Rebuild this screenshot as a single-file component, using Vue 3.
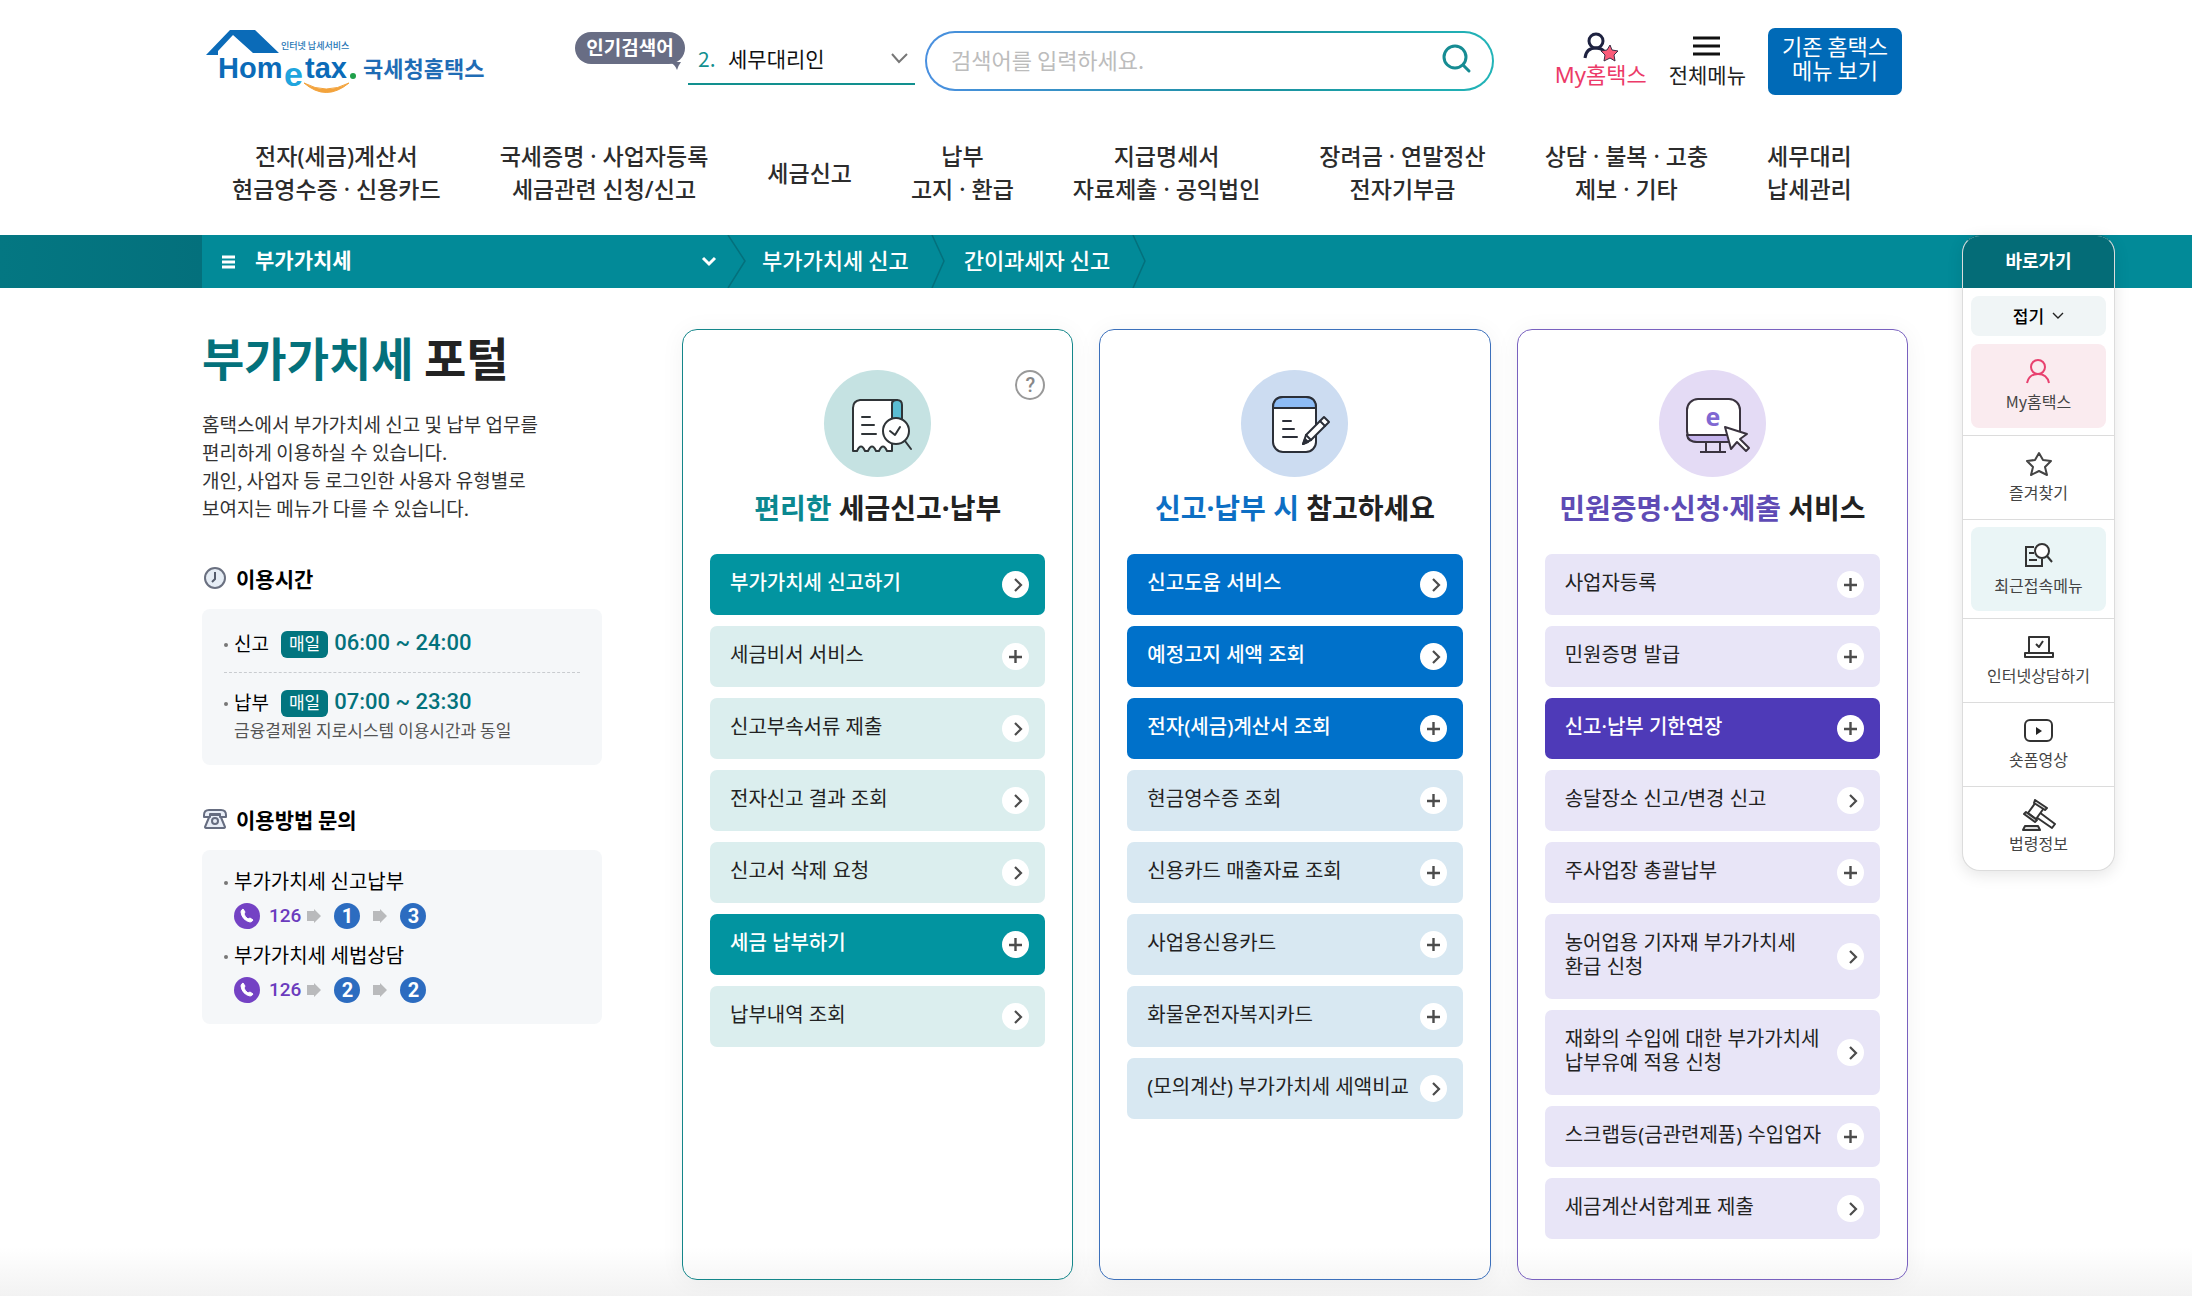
<script setup>
const navItems = [
  ['전자(세금)계산서', '현금영수증 · 신용카드'],
  ['국세증명 · 사업자등록', '세금관련 신청/신고'],
  ['세금신고'],
  ['납부', '고지 · 환급'],
  ['지급명세서', '자료제출 · 공익법인'],
  ['장려금 · 연말정산', '전자기부금'],
  ['상담 · 불복 · 고충', '제보 · 기타'],
  ['세무대리', '납세관리'],
]

const hours = [
  { name: '신고', time: '06:00 ~ 24:00' },
  { name: '납부', time: '07:00 ~ 23:30', note: '금융결제원 지로시스템 이용시간과 동일' },
]

const contacts = [
  { name: '부가가치세 신고납부', steps: [1, 3] },
  { name: '부가가치세 세법상담', steps: [2, 2] },
]

const cards = [
  {
    key: 'teal',
    accent: '편리한',
    rest: '세금신고·납부',
    help: true,
    items: [
      { lines: ['부가가치세 신고하기'], strong: true },
      { lines: ['세금비서 서비스'], more: true },
      { lines: ['신고부속서류 제출'] },
      { lines: ['전자신고 결과 조회'] },
      { lines: ['신고서 삭제 요청'] },
      { lines: ['세금 납부하기'], strong: true, more: true },
      { lines: ['납부내역 조회'] },
    ],
  },
  {
    key: 'blue',
    accent: '신고·납부 시',
    rest: '참고하세요',
    items: [
      { lines: ['신고도움 서비스'], strong: true },
      { lines: ['예정고지 세액 조회'], strong: true },
      { lines: ['전자(세금)계산서 조회'], strong: true, more: true },
      { lines: ['현금영수증 조회'], more: true },
      { lines: ['신용카드 매출자료 조회'], more: true },
      { lines: ['사업용신용카드'], more: true },
      { lines: ['화물운전자복지카드'], more: true },
      { lines: ['(모의계산) 부가가치세 세액비교'] },
    ],
  },
  {
    key: 'purple',
    accent: '민원증명·신청·제출',
    rest: '서비스',
    items: [
      { lines: ['사업자등록'], more: true },
      { lines: ['민원증명 발급'], more: true },
      { lines: ['신고·납부 기한연장'], strong: true, more: true },
      { lines: ['송달장소 신고/변경 신고'] },
      { lines: ['주사업장 총괄납부'], more: true },
      { lines: ['농어업용 기자재 부가가치세', '환급 신청'] },
      { lines: ['재화의 수입에 대한 부가가치세', '납부유예 적용 신청'] },
      { lines: ['스크랩등(금관련제품) 수입업자'], more: true },
      { lines: ['세금계산서합계표 제출'] },
    ],
  },
]
</script>

<template>
  <div class="page">
    <header class="wrap header">
      <div class="top">
        <a href="#" class="logo" aria-label="국세청 홈택스">
          <svg width="284" height="70" viewBox="0 0 284 70">
            <path d="M0 27 L24 2 H49 L73 25 H47 L27 7 L12 23 V27 Z" fill="#0b6bb8" />
            <text x="75" y="21" class="logo-sub">인터넷 납세서비스</text>
            <text x="12" y="50" class="logo-en">Hom</text>
            <text x="78" y="58" class="logo-e">e</text>
            <text x="99" y="50" class="logo-en">tax</text>
            <circle cx="147" cy="48" r="3" fill="#1fa04a" />
            <path d="M98 55 Q120 74 143 55 Q120 67 98 55 Z" fill="#f3a33c" stroke="#f3a33c" />
            <text x="157" y="49" class="logo-ko">국세청홈택스</text>
          </svg>
        </a>
        <label class="pill" for="keyword">인기검색어
          <svg width="12" height="8" viewBox="0 0 12 8"><path d="M0 0 H12 Q9 4 8 8 Q6 2 0 0Z" fill="#686d84" /></svg>
        </label>
        <div class="keyword">
          <span class="rank">2.</span>
          <select id="keyword"><option>세무대리인</option></select>
          <svg class="chev" width="17" height="11" viewBox="0 0 17 11"><path d="M1 1 L8 9 L16 1" fill="none" stroke="#777" stroke-width="2" /></svg>
        </div>
        <form class="search" @submit.prevent>
          <input type="text" aria-label="검색어" placeholder="검색어를 입력하세요." />
          <button type="submit" aria-label="검색">
            <svg width="30" height="30" viewBox="0 0 30 30" fill="none" stroke="#168c93" stroke-width="3"><circle cx="13" cy="13" r="11" /><path d="M21 21 L27 27" stroke-linecap="round" /></svg>
          </button>
        </form>
        <a href="#" class="util my">
          <svg width="36" height="30" viewBox="0 0 36 30">
            <g fill="none" stroke="#1e2240" stroke-width="3"><circle cx="13" cy="9" r="7" /><path d="M2 26 Q3 16 13 16 Q18 16 21 19" /></g>
            <path d="M27 13 L29 18 L35 19 L31 23 L32 29 L27 26 L21 29 L22 23 L18 19 L24 18 Z" fill="#fb5b79" stroke="#3b2d45" stroke-width="1" stroke-linejoin="round" />
          </svg>
          My홈택스
        </a>
        <a href="#" class="util">
          <svg width="28" height="30" viewBox="0 0 28 30"><path d="M0 6 H27 M0 14 H27 M0 22 H27" stroke="#111" stroke-width="3" /></svg>
          전체메뉴
        </a>
        <button type="button" class="old">기존 홈택스<br />메뉴 보기</button>
      </div>
      <nav class="gnb">
        <a v-for="item in navItems" :key="item[0]" href="#">
          <span v-for="line in item" :key="line">{{ line }}</span>
        </a>
      </nav>
    </header>

    <div class="crumbs">
      <div class="crumb-edge"></div>
      <nav class="crumb-row" aria-label="현재 위치">
        <button type="button" class="crumb-menu">
          <svg width="15" height="16" viewBox="0 0 15 16"><path d="M1 3 H14 M1 8 H14 M1 13 H14" stroke="#fff" stroke-width="3" /></svg>
          <span>부가가치세</span>
          <svg width="16" height="11" viewBox="0 0 16 11"><path d="M2 2 L8 8 L14 2" fill="none" stroke="#fff" stroke-width="3" /></svg>
        </button>
        <svg class="sep" width="20" height="53" viewBox="0 0 20 53"><path d="M1 0 L18 26 L1 53" /></svg>
        <a href="#">부가가치세 신고</a>
        <svg class="sep" width="20" height="53" viewBox="0 0 20 53"><path d="M3 0 L15 26 L3 53" /></svg>
        <a href="#">간이과세자 신고</a>
        <svg class="sep" width="20" height="53" viewBox="0 0 20 53"><path d="M3 0 L15 26 L3 53" /></svg>
      </nav>
    </div>

    <div class="main-bg">
      <main class="wrap main">
        <section class="intro">
          <h1><em>부가가치세</em> 포털</h1>
          <p class="desc">
            홈택스에서 부가가치세 신고 및 납부 업무를<br />편리하게 이용하실 수 있습니다.<br />
            개인, 사업자 등 로그인한 사용자 유형별로<br />보여지는 메뉴가 다를 수 있습니다.
          </p>

          <h2>
            <svg width="24" height="24" viewBox="0 0 24 24" fill="none"><circle cx="12" cy="12" r="10" fill="#e6edf5" stroke="#6a7080" stroke-width="2" /><path d="M12 6 V13 L9 16" stroke="#555c6c" stroke-width="2" /></svg>
            이용시간
          </h2>
          <ul class="box hours">
            <li v-for="h in hours" :key="h.name">
              <div class="hour"><span class="name">{{ h.name }}</span><span class="daily">매일</span><strong>{{ h.time }}</strong></div>
              <p v-if="h.note">{{ h.note }}</p>
            </li>
          </ul>

          <h2>
            <svg width="24" height="24" viewBox="0 0 24 24" fill="#e9eef7" stroke="#666d80" stroke-width="2" stroke-linejoin="round"><path d="M7 8 L2 20 Q2 21 4 21 H20 Q22 21 22 20 L17 8 Z" /><path d="M1 8 Q1 3 6 3 H18 Q23 3 23 8 V10 H17 V7 H7 V10 H1 Z" /><circle cx="12" cy="14" r="3" /></svg>
            이용방법 문의
          </h2>
          <ul class="box contacts">
            <li v-for="c in contacts" :key="c.name">
              <span class="name">{{ c.name }}</span>
              <div class="dial">
                <svg width="26" height="26" viewBox="0 0 26 26"><circle cx="13" cy="13" r="13" fill="#7442c4" /><path d="M9 6 Q7 7 7 9 Q8 17 16 19 Q18 19 19 17 L16 15 L14 16 Q11 14 10 11 L11 9 Z" fill="#fff" stroke="#fff" stroke-linejoin="round" /></svg>
                <b>126</b>
                <template v-for="(s, i) in c.steps" :key="i">
                  <svg width="14" height="14" viewBox="0 0 14 14"><path d="M0 2 H7 V0 L14 7 L7 14 V12 H0 Z" fill="#b9babc" /></svg>
                  <span class="step">{{ s }}</span>
                </template>
              </div>
            </li>
          </ul>
        </section>

        <div class="cards">
          <section v-for="card in cards" :key="card.key" class="card" :class="card.key">
            <button v-if="card.help" type="button" class="help" aria-label="도움말">?</button>
            <div class="emblem">
              <svg v-if="card.key === 'teal'" width="107" height="107" viewBox="0 0 107 107" fill="#fff" stroke="#2f3437" stroke-width="2" stroke-linejoin="round" stroke-linecap="round">
                <path d="M68 81 V34 Q68 30 73 30 H36 Q29 31 29 38 V81 H33 Q37 72 41 81 H44 Q48 72 52 81 H55 Q59 72 63 81 Z" />
                <path d="M68 50 V34 Q68 30 73 30 Q78 30 78 35 V50 Z" fill="#5bbdd3" />
                <path d="M38 47 H46 M38 55 H50 M38 64 H52" fill="none" />
                <circle cx="72" cy="61" r="13" /><path d="M66 61 L71 65 L76 57 M81 71 L87 79" fill="none" />
              </svg>
              <svg v-else-if="card.key === 'blue'" width="107" height="107" viewBox="0 0 107 107" fill="#fff" stroke="#2b2f38" stroke-width="2" stroke-linejoin="round" stroke-linecap="round">
                <rect x="32" y="27" width="43" height="55" rx="10" />
                <path d="M32 38 Q32 27 42 27 H65 Q75 27 75 38 Z" fill="#8dbcf6" />
                <path d="M42 51 H50 M42 59 H53 M42 67 H56" fill="none" />
                <path d="M62 74 L65 65 L83 47 L88 52 L70 70 Z" /><path d="M79 51 L84 56 M65 65 L70 70" /><path d="M62 74 L64 69 L67 72 Z" fill="#2b2f38" />
              </svg>
              <svg v-else width="107" height="107" viewBox="0 0 107 107" fill="#fff" stroke="#3a333f" stroke-width="2" stroke-linejoin="round">
                <path d="M47 72 V82 H61 V72 Z" fill="#e4dbf5" /><path d="M41 82 H67" />
                <rect x="28" y="29" width="53" height="43" rx="11" />
                <path d="M28 65 H81 Q80 72 72 72 H38 Q29 72 28 65 Z" fill="#c5b4ec" />
                <text x="54" y="56" text-anchor="middle" class="mon-e">e</text>
                <path d="M66 57 L88 64 L81 69 L90 78 L87 81 L78 72 L72 79 Z" />
              </svg>
            </div>
            <h3><em>{{ card.accent }}</em> {{ card.rest }}</h3>
            <ul>
              <li v-for="item in card.items" :key="item.lines[0]">
                <a href="#" :class="{ strong: item.strong }">
                  <span class="label"><span v-for="l in item.lines" :key="l">{{ l }}</span></span>
                  <svg width="27" height="27" viewBox="0 0 27 27">
                    <circle cx="13.5" cy="13.5" r="13.5" fill="#fff" />
                    <path v-if="item.more" d="M7 14 H20 M13.5 7 V20" fill="none" stroke="#4c4c4c" stroke-width="2.4" />
                    <path v-else d="M13 8 L19 14 L13 20" fill="none" stroke="#4c4c4c" stroke-width="2.2" />
                  </svg>
                </a>
              </li>
            </ul>
          </section>
        </div>
      </main>
    </div>

    <aside class="quick">
      <h2>바로가기</h2>
      <div class="quick-first">
        <button type="button">접기 <svg width="12" height="8" viewBox="0 0 12 8"><path d="M1 1 L6 6 L11 1" fill="none" stroke="#222" stroke-width="1.4" /></svg></button>
        <a href="#" class="tile pink">
          <svg width="25" height="25" viewBox="0 0 25 25" fill="none" stroke="#e8416f" stroke-width="2"><circle cx="12" cy="8" r="7" /><path d="M1 24 Q3 15 12 15 Q21 15 23 24" /></svg>
          My홈택스
        </a>
      </div>
      <a href="#">
        <svg width="28" height="26" viewBox="0 0 28 26" fill="none" stroke="#444" stroke-width="2" stroke-linejoin="round"><path d="M14 2 L18 9 L26 10 L20 16 L22 24 L14 20 L6 24 L8 16 L2 10 L10 9 Z" /></svg>
        즐겨찾기
      </a>
      <div class="quick-mid">
        <a href="#" class="tile mint">
          <svg width="29" height="26" viewBox="0 0 29 26" fill="none" stroke="#333" stroke-width="2"><path d="M10 5 H2 V24 H18 V17 M5 11 H10 M5 18 H13" /><circle cx="18" cy="9" r="7" fill="#fff" /><path d="M23 14 L28 20" /></svg>
          최근접속메뉴
        </a>
      </div>
      <a href="#">
        <svg width="30" height="26" viewBox="0 0 30 26" fill="none" stroke="#333" stroke-width="2" stroke-linejoin="round"><path d="M5 18 V3 H25 V18 M1 19 H29 V23 H1 Z" /><path d="M12 10 L15 13 L19 7" /></svg>
        인터넷상담하기
      </a>
      <a href="#">
        <svg width="30" height="26" viewBox="0 0 30 26"><rect x="1" y="2" width="27" height="21" rx="5" fill="none" stroke="#333" stroke-width="2" /><path d="M12 9 L18 13 L12 17 Z" fill="#222" /></svg>
        숏폼영상
      </a>
      <a href="#" class="law">
        <svg width="34" height="32" viewBox="0 0 34 32" fill="#ddd" stroke="#333" stroke-width="2" stroke-linejoin="round"><path d="M17 13 L33 25 L30 29 L14 18 Z" fill="#fff" /><path d="M14 3 L22 9 L14 20 L6 14 Z" fill="#fff" /><path d="M13 1 L25 9 L23 11 L12 4 Z M4 13 L15 21 L13 23 L2 15 Z" /><path d="M1 31 L3 27 H16 L18 31 Z" /></svg>
        법령정보
      </a>
    </aside>
  </div>
</template>

<style>
body {
  margin: 0;
  background: #fff;
}
</style>

<style scoped>
.page {
  position: relative;
  font-family: "Noto Sans CJK KR", "Noto Sans", sans-serif;
  color: #222;
}
.page * { box-sizing: border-box; }
a { color: inherit; text-decoration: none; }
button, input, select { font: inherit; color: inherit; border: 0; background: none; padding: 0; margin: 0; }
ul, h1, h2, h3, p { margin: 0; padding: 0; list-style: none; }
em { font-style: normal; }
svg { display: block; flex: none; }

/* Narrow middle dots and parentheses come from the Latin face */
.gnb, .card h3, .card ul, .my { font-family: "Noto Sans", "Noto Sans CJK KR", sans-serif; }

/* The content column sits left of centre to leave room for the quick menu */
.wrap {
  margin-left: max(20px, calc(50% - 894px));
  width: min(1706px, calc(100% - 304px));
}

.header { padding: 28px 0 29px; }
.top { display: flex; align-items: flex-start; padding: 0 6px 0 4px; }
.logo { margin-right: 85px; height: 67px; }
.logo-sub { font-size: 9px; font-weight: 500; fill: #2575b5; }
.logo-en { font-family: "Liberation Sans", Arial, sans-serif; font-size: 29px; font-weight: 700; fill: #0b6bb8; }
.logo-e { font-family: "Liberation Sans", Arial, sans-serif; font-size: 34px; font-weight: 700; fill: #20a5de; }
.logo-ko { font-size: 22px; font-weight: 700; fill: #1f6cb5; }
.pill {
  position: relative;
  margin: 4px 3px 0 0;
  width: 110px;
  height: 32px;
  border-radius: 16px;
  background: #686d84;
  color: #fff;
  font-size: 19px;
  font-weight: 700;
  line-height: 30px;
  text-align: center;
  white-space: nowrap;
}
.pill svg { position: absolute; right: 4px; bottom: -6px; }
.keyword {
  display: flex;
  align-items: center;
  width: 227px;
  height: 57px;
  padding: 5px 7px 0 10px;
  border-bottom: 2px solid #12908f;
  font-size: 21px;
}
.rank { color: #12908f; width: 30px; }
.keyword select { appearance: none; flex: 1; color: #111; height: 32px; }
.search {
  display: flex;
  align-items: center;
  flex: 1;
  height: 60px;
  margin: 3px 61px 0 10px;
  padding: 0 20px 4px 24px;
  border: 2px solid transparent;
  border-radius: 30px;
  background: linear-gradient(#fff, #fff) padding-box, linear-gradient(90deg, #4a90e0, #1a929f 60%, #22b4b8) border-box;
}
.search input { flex: 1; min-width: 0; font-size: 22px; outline: 0; height: 40px; }
.search input::placeholder { color: #bcbcbc; opacity: 1; }
.util {
  display: flex;
  flex-direction: column;
  align-items: center;
  padding-top: 4px;
  margin-right: 22px;
  font-size: 21px;
  line-height: 24px;
  white-space: nowrap;
}
.my { color: #ec3a68; font-size: 22px; }
.old {
  width: 134px;
  height: 67px;
  padding-bottom: 10px;
  border-radius: 7px;
  background: #006ab7;
  color: #fff;
  font-size: 22px;
  line-height: 24px;
  white-space: nowrap;
}
.gnb {
  display: flex;
  align-items: center;
  gap: 59px;
  margin-top: 45px;
  padding-left: 30px;
  font-size: 23px;
  font-weight: 500;
  line-height: 33px;
  color: #2c2c2c;
  text-align: center;
  white-space: nowrap;
}
.gnb span { display: block; }

.crumbs {
  display: flex;
  height: 53px;
  background: #028a98;
  color: #fff;
}
.crumb-edge { width: max(20px, calc(50% - 894px)); background: linear-gradient(90deg, #047782, #04707c); }
.crumb-row { display: flex; align-items: center; font-size: 22px; font-weight: 500; white-space: nowrap; }
.crumb-row a { padding: 0 20px 6px 15px; }
.crumb-menu { display: flex; align-items: center; width: 525px; height: 53px; padding: 0 10px 0 19px; font-size: 21px; font-weight: 700; }
.crumb-menu span { flex: 1; padding: 0 0 6px 19px; text-align: left; }
.sep path { fill: none; stroke: #04707c; stroke-width: 1.5; }

.main-bg { background: linear-gradient(#fff, #f2f2f2) bottom / 100% 50px no-repeat; }
.main { display: flex; gap: 80px; padding: 41px 0 17px; }
.intro { width: 400px; flex: none; }
.intro h1 { font-size: 46px; font-weight: 700; line-height: 54px; white-space: nowrap; }
.intro h1 em { color: #04717b; }
.desc { margin-top: 27px; padding-bottom: 2px; font-size: 19px; line-height: 28px; color: #333; white-space: nowrap; }
.intro h2 { display: flex; align-items: center; gap: 9px; margin-top: 38px; padding-left: 1px; font-size: 21px; font-weight: 700; line-height: 32px; color: #000; }
.box { margin-top: 15px; padding: 17px 22px 20px; border-radius: 8px; background: #f5f7f9; }
.name { position: relative; padding-left: 10px; color: #000; }
.name::before { content: ""; position: absolute; left: 0; top: 50%; width: 4px; height: 4px; border-radius: 2px; background: #777; }
.hours { padding: 16px 22px 24px; }
.hours li + li { border-top: 1px dashed #c9ccd0; margin-top: 12px; padding-top: 11px; }
.hour { display: flex; align-items: center; height: 35px; font-size: 19px; }
.hour .daily { margin: 3px 6px 0 12px; padding: 0 8px; height: 27px; border-radius: 6px; background: #02757f; color: #fff; font-size: 17px; line-height: 23px; }
.hour strong { font-family: Roboto, sans-serif; font-size: 22px; font-weight: 500; color: #03727c; }
.hours p { padding-left: 10px; font-size: 17px; line-height: 22px; color: #555; white-space: nowrap; }
.contacts { font-size: 20px; line-height: 28px; }
.contacts li + li { margin-top: 11px; }
.dial { display: flex; align-items: center; gap: 13px; margin-top: 7px; padding-left: 10px; height: 28px; font-family: Roboto, sans-serif; }
.dial b { margin: 0 -7px 0 -4px; color: #6b3cbe; font-size: 19px; font-weight: 500; }
.step { width: 26px; height: 26px; border-radius: 13px; background: #2c6cc0; color: #fff; font-size: 20px; font-weight: 700; line-height: 26px; text-align: center; }

.cards { flex: 1; display: grid; grid-template-columns: repeat(3, 1fr); gap: 26px; }
.card { position: relative; padding: 40px 27px; border: 1px solid var(--line); border-radius: 15px; box-shadow: 0 2px 24px rgba(0, 0, 0, 0.05); }
.teal { --line: #14868a; --main: #0294a0; --soft: #dbeeee; --disc: #c5e2e2; --accent: #0b8890; }
.blue { --line: #3c70bb; --main: #0071ca; --soft: #d8e8f2; --disc: #ccdcf1; --accent: #0d6fc4; }
.purple { --line: #7961bf; --main: #4e3ab8; --soft: #e8e5f7; --disc: #e4dbf5; --accent: #5e4bb5; }
.help { position: absolute; top: 40px; right: 27px; width: 30px; height: 30px; border: 2px solid #999; border-radius: 50%; color: #888; font-family: Roboto, sans-serif; font-size: 20px; font-weight: 500; line-height: 24px; }
.emblem { width: 107px; height: 107px; margin: 0 auto; border-radius: 50%; background: var(--disc); }
.mon-e { font-family: "Open Sans", sans-serif; font-size: 25px; font-weight: 700; fill: #7f68d2; stroke: none; }
.card h3 { margin: 10px -20px 25px; font-size: 28px; font-weight: 700; line-height: 42px; text-align: center; white-space: nowrap; }
.card h3 em { color: var(--accent); }
.card ul { display: flex; flex-direction: column; gap: 11px; }
.card li a { display: flex; align-items: center; justify-content: space-between; min-height: 61px; padding: 0 16px 0 20px; border-radius: 7px; background: var(--soft); font-size: 20px; line-height: 24px; color: #222; }
.card li a.strong { background: var(--main); color: #fff; font-weight: 500; }
.label { padding: 17px 0 20px; white-space: nowrap; }
.label span { display: block; }

.quick {
  position: absolute;
  top: 235px;
  right: 77px;
  width: 153px;
  overflow: hidden;
  border: 1px solid #dcdcdc;
  border-top-color: #026c77;
  border-radius: 18px;
  background: #fff;
  box-shadow: 0 4px 16px rgba(0, 0, 0, 0.1);
  font-size: 16px;
  line-height: 24px;
  color: #444;
}
.quick h2 { height: 52px; background: #046c77; color: #fff; font-size: 18px; font-weight: 700; line-height: 48px; text-align: center; }
.quick-first { padding: 8px 8px 7px; }
.quick-mid { padding: 7px 8px; }
.quick button { display: flex; align-items: center; justify-content: center; gap: 8px; width: 100%; height: 40px; border-radius: 8px; background: #f0f5f6; color: #000; font-size: 17px; font-weight: 500; }
.quick a { display: flex; flex-direction: column; align-items: center; justify-content: center; gap: 3px; height: 84px; white-space: nowrap; }
.quick > * + * { border-top: 1px solid #dcdcdc; }
.quick > .quick-first { border-top: 0; }
.quick .tile { gap: 5px; border-radius: 8px; }
.quick .pink { margin-top: 8px; background: #faebef; }
.quick .mint { background: #eaf5f6; }
.quick .law { gap: 0; padding-bottom: 4px; }
</style>
